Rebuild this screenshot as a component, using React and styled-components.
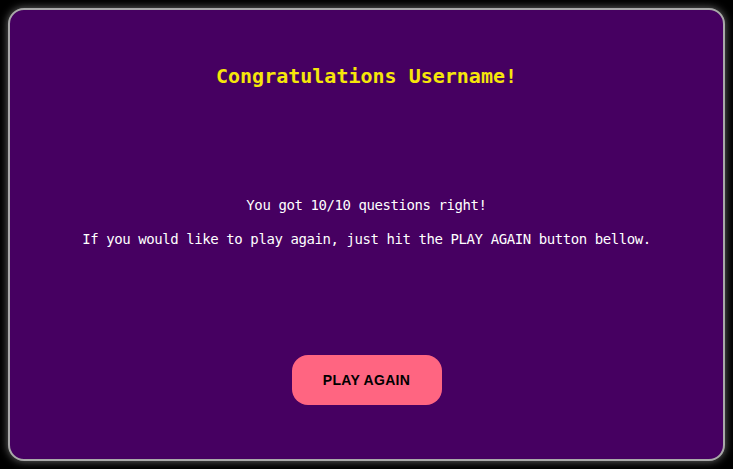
import React from "react";
import styled, { createGlobalStyle } from "styled-components";

const App = () => (
  <>
    <GlobalStyle />
    <Card>
      <Title>Congratulations Username!</Title>
      <Message>
        <Line>You got 10/10 questions right!</Line>
        <Line>If you would like to play again, just hit the PLAY AGAIN button bellow.</Line>
      </Message>
      <PlayButton>PLAY AGAIN</PlayButton>
    </Card>
  </>
);

const GlobalStyle = createGlobalStyle`
  html, body {
    margin: 0;
    background: #000;
  }
  body {
    padding: 8px;
    font-family: "DejaVu Sans Mono", monospace;
  }
`;

const Card = styled.div`
  box-sizing: border-box;
  width: 717px;
  height: 453px;
  background: #460061;
  border: 2px solid #a9a9a9;
  border-radius: 16px;
  box-shadow: 0 0 8px rgba(200, 200, 200, 0.55);
  display: flex;
  flex-direction: column;
  align-items: center;
  padding-top: 54px;
`;

const Title = styled.h1`
  margin: 0;
  font-size: 20px;
  line-height: 24px;
  font-weight: bold;
  color: #f6e60a;
`;

const Message = styled.div`
  margin-top: 108px;
  display: flex;
  flex-direction: column;
  align-items: center;
  gap: 16px;
`;

const Line = styled.p`
  margin: 0;
  font-size: 14px;
  line-height: 18px;
  letter-spacing: -0.42px;
  color: #ffffff;
`;

const PlayButton = styled.button`
  margin-top: 107px;
  width: 150px;
  height: 50px;
  border: none;
  border-radius: 16px;
  background: #ff6581;
  color: #000;
  font-family: "Liberation Sans", Arial, sans-serif;
  font-weight: bold;
  font-size: 14px;
  letter-spacing: 0.3px;
  cursor: pointer;
`;

export default App;
